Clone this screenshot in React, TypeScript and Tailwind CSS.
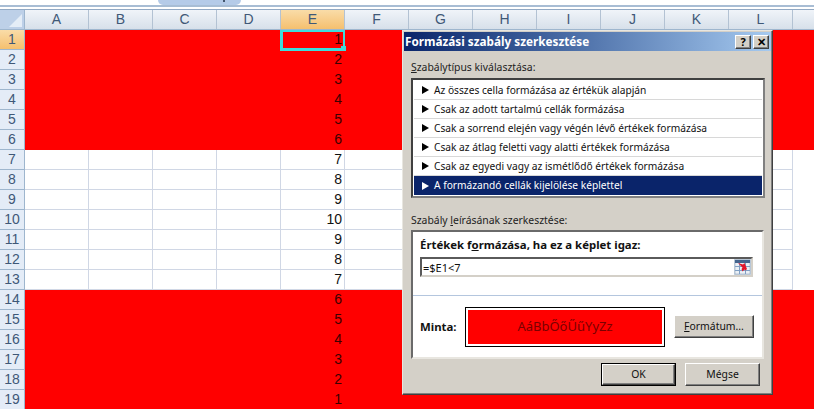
const columns = ["A", "B", "C", "D", "E", "F", "G", "H", "I", "J", "K", "L"];
const values = [1, 2, 3, 4, 5, 6, 7, 8, 9, 10, 9, 8, 7, 6, 5, 4, 3, 2, 1];
const ruleTypes = [
  "Az összes cella formázása az értékük alapján",
  "Csak az adott tartalmú cellák formázása",
  "Csak a sorrend elején vagy végén lévő értékek formázása",
  "Csak az átlag feletti vagy alatti értékek formázása",
  "Csak az egyedi vagy az ismétlődő értékek formázása",
  "A formázandó cellák kijelölése képlettel",
];

const sheetFont = "font-['Liberation_Sans',sans-serif]";
const dialogFont = "font-['Noto_Sans',sans-serif]";
const raised =
  "border border-t-white border-l-white border-r-[#404040] border-b-[#404040] shadow-[inset_-1px_-1px_0_#808080]";
const sunken =
  "border-2 border-t-[#5a5a5a] border-l-[#5a5a5a] border-r-[#d4d0c8] border-b-[#d4d0c8]";

function RangeIcon() {
  return (
    <svg width="17" height="16" viewBox="0 0 17 16" className="shrink-0">
      <rect width="17" height="16" fill="#c9d6e4" />
      <rect x="1" y="1" width="15" height="14" fill="#eaf0f6" stroke="#8497ad" strokeWidth="0.5" />
      <rect x="1" y="1" width="15" height="3" fill="#43648e" />
      <path d="M1 7.5h15M1 11.5h15M5.5 4v11M11.5 4v11" stroke="#7f9fc4" />
      <path d="M4 4l5 1.5 1.5-1.5 2.5 6-1.5 1.5-1-1-2 2-1-2.5 1-1.5z" fill="#e2162b" />
    </svg>
  );
}

function Sheet() {
  return (
    <div className={`flex h-[409px] w-[814px] flex-col overflow-hidden bg-white ${sheetFont}`}>
      <div className="h-[9px] shrink-0 bg-white">
        <div className="flex h-[7px] border-b-2 border-[#a8bdd4] pl-[158px]">
          <div className="flex h-[5px] w-[83px] justify-end rounded-b-[6px] bg-[#b5cbe8] pr-4">
            <div className="h-[2px] w-[2px] bg-[#44566e]" />
          </div>
        </div>
      </div>
      <div className="flex h-[21px] shrink-0 border-y border-t-[#92a9c4] border-b-[#9eb6ce] bg-gradient-to-b from-[#f0f4f9] to-[#d7e0ea] text-[14px] text-[#3f5877]">
        <div className="flex w-[25px] shrink-0 items-end justify-end border-r border-[#9eb6ce] bg-[#bdd0e8] p-[2px]">
          <div className="h-0 w-0 border-b-[13px] border-l-[13px] border-b-[#e4edf7] border-l-transparent" />
        </div>
        {columns.map((c) => (
          <div
            key={c}
            className={`flex w-[64px] shrink-0 items-center justify-center border-r border-[#b3c2d3] ${
              c === "E" ? "bg-gradient-to-b from-[#f9dca8] to-[#f5c06e]" : ""
            }`}
          >
            {c}
          </div>
        ))}
      </div>
      {values.map((v, i) => {
        const red = i < 6 || i >= 13;
        return (
          <div key={i} className={`flex h-[20px] shrink-0 text-[14px] ${red ? "bg-[#ff0000]" : "bg-white"}`}>
            <div
              className={`flex w-[25px] shrink-0 items-center justify-center border-r border-b border-r-[#9eb6ce] border-b-[#9eb6ce] text-[#3f5877] ${
                i === 0 ? "bg-gradient-to-b from-[#f9dca8] to-[#f5c06e]" : "bg-[#e4ecf7]"
              }`}
            >
              {i + 1}
            </div>
            {columns.map((c) => (
              <div
                key={c}
                className={`relative flex w-[64px] shrink-0 items-center justify-end border-r border-b pr-[2px] ${
                  red ? "border-transparent text-[#3a0000]" : "border-[#d0d7e5] text-[#111]"
                }`}
              >
                {c === "E" ? v : ""}
                {c === "E" && i === 0 && (
                  <div className="absolute top-0 left-[-1px] h-[21px] w-[65px] border-t-2 border-r-2 border-b-[3px] border-l-[3px] border-[#3fdcdc]">
                    <div className="absolute -right-[3px] -bottom-[3px] h-[5px] w-[5px] bg-[#3fdcdc]" />
                  </div>
                )}
              </div>
            ))}
            <div className="flex-1" />
          </div>
        );
      })}
    </div>
  );
}

function ClassicButton({ children, isDefault, className }: { children: React.ReactNode; isDefault?: boolean; className: string }) {
  return (
    <div
      className={`flex items-center justify-center bg-[#d4d0c8] text-[10.4px] text-[#111] ${raised} ${
        isDefault ? "outline outline-1 outline-black" : ""
      } ${className}`}
    >
      {children}
    </div>
  );
}

function RuleDialog() {
  return (
    <div
      className={`absolute top-[30px] left-[402px] flex h-[365px] w-[371px] flex-col border border-t-[#e8e6e0] border-l-[#e8e6e0] border-r-[#404040] border-b-[#404040] bg-[#d4d0c8] p-[1px] shadow-[inset_-1px_-1px_0_#808080] ${dialogFont}`}
    >
      <div className="flex h-[19px] shrink-0 items-center justify-between bg-gradient-to-r from-[#0a246a] to-[#a6caf0] pr-[2px] pl-[1px]">
        <span className="text-[11.75px] leading-none font-bold text-white">Formázási szabály szerkesztése</span>
        <div className="flex gap-[2px]">
          <div className={`flex h-[14px] w-[16px] items-center justify-center bg-[#d4d0c8] text-[11px] leading-none font-bold text-black ${raised}`}>?</div>
          <div className={`flex h-[14px] w-[16px] items-center justify-center bg-[#d4d0c8] text-[11px] leading-none font-bold text-black ${raised}`}>✕</div>
        </div>
      </div>

      <div className="flex flex-1 flex-col px-[7px] leading-none text-[#222]">
        <div className="mt-[11px] h-[16px] text-[10.4px]">
          <span className="underline">S</span>zabálytípus kiválasztása:
        </div>
        <div className="h-[120px] w-[354px] border-2 border-t-[#404040] border-l-[#404040] border-r-[#808080] border-b-[#808080] bg-white p-[1px] text-[10.2px] outline outline-1 outline-[#d4d0c8]">
          {ruleTypes.map((rule, i) => {
            const selected = i === ruleTypes.length - 1;
            return (
              <div
                key={rule}
                className={`flex h-[19px] items-center gap-[5px] pl-[8px] ${
                  selected ? "bg-[#0a246a] text-white" : "border-b border-[#d8d8d8] text-[#111]"
                }`}
              >
                <span
                  className={`h-0 w-0 border-y-[4px] border-l-[7px] border-y-transparent ${
                    selected ? "border-l-white" : "border-l-black"
                  }`}
                />
                <span>{rule}</span>
              </div>
            );
          })}
        </div>

        <div className="mt-[17px] h-[15px] text-[10.4px]">
          Szabály <span className="underline">l</span>eírásának szerkesztése:
        </div>
        <div className="flex h-[129px] w-[353px] flex-col border-2 border-t-[#6a6a6a] border-l-[#6a6a6a] border-r-[#e8e6e0] border-b-[#e8e6e0] bg-white">
          <div className="flex h-[64px] flex-col border-b border-[#b4c6de] px-[7px] pt-[7px]">
            <div className="h-[15px] text-[11.4px] font-bold text-[#111]">
              Értékek f<span className="underline">o</span>rmázása, ha ez a képlet igaz:
            </div>
            <div className={`mt-[3px] flex h-[20px] w-[333px] items-center justify-between text-[11px] text-[#111] ${sunken}`}>
              <span className="pl-[1px]">=$E1&lt;7</span>
              <RangeIcon />
            </div>
          </div>
          <div className="flex flex-1 items-center px-[7px]">
            <span className="w-[45px] text-[11.4px] font-bold text-[#111]">Minta:</span>
            <div className="flex h-[40px] w-[200px] items-center justify-center border border-black bg-white p-[2px]">
              <div className="flex h-full w-full items-center justify-center bg-[#ff0000] text-[13px] text-[#7a0000]">AáBbŐőŰűYyZz</div>
            </div>
            <ClassicButton className="ml-[9px] h-[23px] w-[80px]">
              <span>
                <span className="underline">F</span>ormátum...
              </span>
            </ClassicButton>
          </div>
        </div>
        <div className="mt-[4px] flex items-center justify-end gap-[10px] pr-[4px]">
          <ClassicButton isDefault className="h-[21px] w-[73px]">OK</ClassicButton>
          <ClassicButton className="h-[23px] w-[75px]">Mégse</ClassicButton>
        </div>
      </div>
    </div>
  );
}

export default function App() {
  return (
    <div className="relative h-[409px] w-[814px] overflow-hidden">
      <Sheet />
      <RuleDialog />
    </div>
  );
}
